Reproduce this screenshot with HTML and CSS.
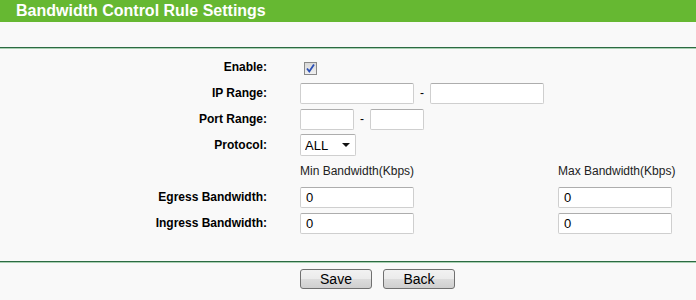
FILE: index.html
```html
<!DOCTYPE html>
<html lang="en">
	<head>
		<meta charset="UTF-8" />
		<title>Bandwidth Control Rule Settings</title>
		<link rel="stylesheet" href="styles.css">
	</head>
	<body>
		<div class="title-bar">Bandwidth Control Rule Settings</div>
		<div class="divider top"></div>
		<div class="form">
			<div class="row">
				<label class="label">Enable:</label>
				<div class="field">
					<span class="check">
						<svg width="11" height="11" viewBox="0 0 11 11">
							<path d="M2 5.5 L4.3 8.5 L9 1.5" fill="none" stroke="#2a4fb5" stroke-width="1.8" />
						</svg>
					</span>
				</div>
			</div>
			<div class="row">
				<label class="label">IP Range:</label>
				<div class="field">
					<input type="text" class="text wide" value="" />
					<span class="dash">-</span>
					<input type="text" class="text wide" value="" />
				</div>
			</div>
			<div class="row">
				<label class="label">Port Range:</label>
				<div class="field">
					<input type="text" class="text short" value="" />
					<span class="dash">-</span>
					<input type="text" class="text short" value="" />
				</div>
			</div>
			<div class="row">
				<label class="label">Protocol:</label>
				<div class="field">
					<div class="select-wrap">
						<select class="select">
							<option>ALL</option>
							<option>TCP</option>
							<option>UDP</option>
						</select>
					</div>
				</div>
			</div>
			<div class="row">
				<span class="label"></span>
				<div class="field">
					<div class="col">Min Bandwidth(Kbps)</div>
					<div class="col">Max Bandwidth(Kbps)</div>
				</div>
			</div>
			<div class="row">
				<label class="label">Egress Bandwidth:</label>
				<div class="field">
					<div class="col"><input type="text" class="text wide" value="0" /></div>
					<div class="col"><input type="text" class="text wide" value="0" /></div>
				</div>
			</div>
			<div class="row">
				<label class="label">Ingress Bandwidth:</label>
				<div class="field">
					<div class="col"><input type="text" class="text wide" value="0" /></div>
					<div class="col"><input type="text" class="text wide" value="0" /></div>
				</div>
			</div>
		</div>
		<div class="divider bottom"></div>
		<div class="buttons">
			<button class="btn">Save</button>
			<button class="btn">Back</button>
		</div>
	</body>
</html>
```

FILE: styles.css
```css
* {
	margin: 0;
	padding: 0;
	box-sizing: border-box;
}

body {
	font-family: "Liberation Sans", Arial, sans-serif;
	font-size: 12px;
	background-color: #f9f9f9;
	color: #000;
}

.title-bar {
	height: 22px;
	line-height: 22px;
	padding-left: 16px;
	background-color: #66b832;
	color: #fff;
	font-size: 16px;
	font-weight: bold;
}

.divider {
	height: 2px;
	border-top: 1px solid #2c6b42;
	border-bottom: 1px solid #a9d0b3;
}

.divider.top {
	margin-top: 25px;
}

.divider.bottom {
	margin-top: 25px;
}

.form {
	padding-top: 5px;
}

.row {
	display: flex;
	align-items: center;
	height: 26px;
}

.label {
	flex-shrink: 0;
	width: 267px;
	margin-right: 33px;
	text-align: right;
	font-weight: bold;
}

.field {
	display: flex;
	align-items: center;
}

.col {
	flex-shrink: 0;
	width: 258px;
	color: #222;
}

.col:last-child {
	width: auto;
}

.check {
	display: flex;
	align-items: center;
	justify-content: center;
	width: 13px;
	height: 13px;
	margin: 2px 0 0 4px;
	border: 1px solid #8a8a8a;
	background: linear-gradient(#d8d8d8, #f0f0f0);
}

.text {
	height: 21px;
	padding: 0 5px;
	border: 1px solid #cfcfcf;
	border-top-color: #adadad;
	border-radius: 2px;
	background-color: #fff;
	font-family: inherit;
	font-size: 13px;
	color: #000;
	outline: none;
}

.text.wide {
	width: 114px;
}

.text.short {
	width: 54px;
}

.dash {
	width: 16px;
	text-align: center;
}

.select-wrap {
	position: relative;
	width: 56px;
	height: 22px;
}

.select {
	appearance: none;
	-webkit-appearance: none;
	width: 100%;
	height: 100%;
	padding-left: 4px;
	border: 1px solid #cfcfcf;
	border-top-color: #adadad;
	border-radius: 2px;
	background-color: #fff;
	font-family: inherit;
	font-size: 13px;
	color: #000;
	outline: none;
}

.select-wrap::after {
	content: "";
	position: absolute;
	right: 6px;
	top: 9px;
	border-left: 4px solid transparent;
	border-right: 4px solid transparent;
	border-top: 4px solid #111;
	pointer-events: none;
}

.buttons {
	display: flex;
	gap: 11px;
	padding: 6px 0 0 300px;
}

.btn {
	width: 72px;
	height: 20px;
	border: 1px solid #707070;
	border-radius: 3px;
	background: linear-gradient(#f2f2f2 0%, #ebebeb 50%, #dddddd 50%, #cfcfcf 100%);
	font-family: inherit;
	font-size: 14px;
	color: #000;
	cursor: pointer;
}
```
